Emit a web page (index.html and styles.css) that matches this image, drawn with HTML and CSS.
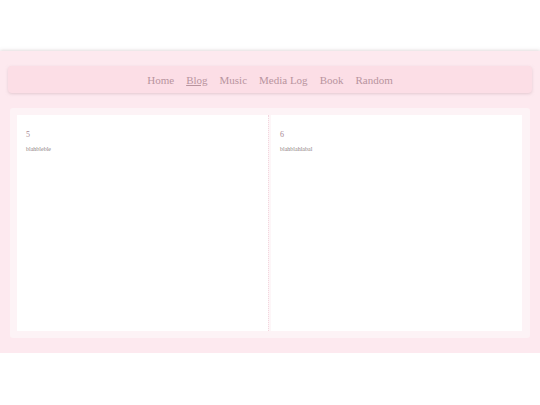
FILE: index.html
```html
<!DOCTYPE html>
<html>
<head>
<meta charset="utf-8">
<link rel="stylesheet" href="styles.css">
</head>
<body>
<div class="band">
  <nav class="nav">
    <a class="nav-link">Home</a>
    <a class="nav-link active">Blog</a>
    <a class="nav-link">Music</a>
    <a class="nav-link">Media Log</a>
    <a class="nav-link">Book</a>
    <a class="nav-link">Random</a>
  </nav>
  <main class="posts">
    <article class="card">
      <h2 class="card-title">5</h2>
      <p class="card-text">blahbleble</p>
    </article>
    <div class="divider"></div>
    <article class="card">
      <h2 class="card-title">6</h2>
      <p class="card-text">blahblahlabal</p>
    </article>
  </main>
</div>
</body>
</html>
```
FILE: styles.css
```css
html, body {
  margin: 0;
  padding: 0;
  background: #ffffff;
  font-family: "Liberation Serif", "DejaVu Serif", serif;
}
body {
  padding-top: 51px;
}
.band {
  background: #fde9ef;
  padding: 15px 8px 15px 8px;
  height: 272px;
  box-shadow: 0 -1px 3px rgba(200, 180, 185, 0.35), 0 2px 4px rgba(150, 140, 145, 0.5);
}
.nav {
  height: 27px;
  background: #fcdee6;
  border-radius: 4px;
  box-shadow: 0 1px 3px rgba(210, 180, 190, 0.6);
  display: flex;
  justify-content: center;
  align-items: center;
  gap: 12px;
}
.nav-link {
  font-size: 11px;
  color: #b8949e;
  text-decoration: none;
}
.nav-link.active {
  text-decoration: underline;
}
.posts {
  margin: 15px 2px 0 2px;
  background: #fdf3f6;
  border-radius: 3px;
  padding: 7px 8px 7px 7px;
  height: 216px;
  display: flex;
}
.card {
  flex: 1;
  background: #ffffff;
  padding: 15px 9px;
}
.divider {
  width: 3px;
  background: #fdf6f8;
  border-left: 1px dotted #f3d6de;
  box-sizing: border-box;
}
.card-title {
  margin: 0;
  font-size: 8px;
  font-weight: normal;
  color: #a88893;
}
.card-text {
  margin: 7px 0 0 0;
  font-size: 6px;
  color: #8c7f84;
}
```
